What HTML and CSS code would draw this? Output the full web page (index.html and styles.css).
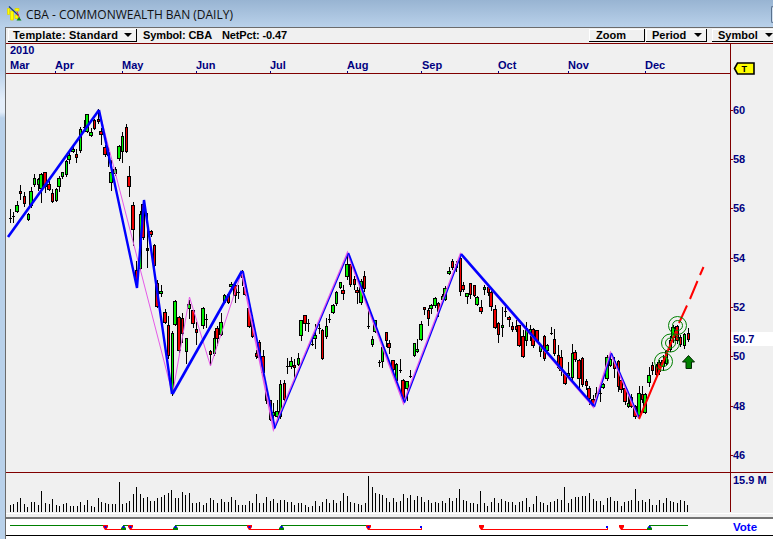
FILE: index.html
```html
<!DOCTYPE html>
<html lang="en">
<head>
<meta charset="utf-8">
<title>CBA - COMMONWEALTH BAN (DAILY)</title>
<link rel="stylesheet" href="styles.css">
</head>
<body>
<div class="window">
  <header class="titlebar">
    <svg class="app-icon" width="15" height="16" viewBox="0 0 15 16">
      <path d="M.5 2.500h2v6h-2zM3.500 5h3v9h-3zM8 2.500h4V5H8zM8 9h3v3.500H8z" fill="#ff0" stroke="#e0d400" stroke-width=".8"/>
      <path d="M2 .5l9.500 9" stroke="#173c86" stroke-width="1.2" fill="none"/>
      <path d="M10 5.500l2.500 6.500" stroke="#d33" stroke-width="1" fill="none"/>
      <path d="M9.500 14.500l2.500-3.500 2.500 3.500z" fill="#08851b"/>
    </svg>
    <span class="title">CBA - COMMONWEALTH BAN (DAILY)</span>
    <span class="window-button"></span>
  </header>
  <main class="frame">
    <div class="toolbar">
      <div class="button template"><span class="label-template">Template: Standard</span><i class="caret"></i></div>
      <span class="symbol-name">Symbol: CBA</span>
      <span class="net">NetPct: -0.47</span>
      <div class="button zoom"><span>Zoom</span></div>
      <div class="button period"><span>Period</span><i class="caret"></i></div>
      <div class="button symbol"><span>Symbol</span><i class="caret"></i></div>
    </div>
    <svg class="chart" width="767" height="470" viewBox="6 43 767 470">
      <g class="rules">
        <path d="M6 43.5H773M6 73.5H730M6 472.5H773M730.5 43V512"/>
        <path d="M730 110.500h3M730 159.500h3M730 208.500h3M730 258.500h3M730 307.500h3M730 356.500h3M730 406.500h3M730 455.500h3"/>
      </g>
      <path class="month-ticks" d="M55.500 71v2M122.500 71v2M196.500 71v2M270.500 71v2M347.500 71v2M421.500 71v2M498.500 71v2M568.500 71v2M645.500 71v2"/>
      <g class="axis">
        <text x="10" y="54">2010</text>
        <text x="10" y="69">Mar</text><text x="55" y="69">Apr</text><text x="122" y="69">May</text>
        <text x="196" y="69">Jun</text><text x="270" y="69">Jul</text><text x="347" y="69">Aug</text>
        <text x="422" y="69">Sep</text><text x="498" y="69">Oct</text><text x="568" y="69">Nov</text>
        <text x="645" y="69">Dec</text>
      </g>
      <rect x="731" y="332" width="42" height="14" fill="#fff"/>
      <g class="axis">
        <text x="733" y="114">60</text><text x="733" y="163">58</text><text x="733" y="212">56</text>
        <text x="733" y="262">54</text><text x="733" y="311">52</text><text x="733" y="343">50.7</text>
        <text x="733" y="360">50</text><text x="733" y="410">48</text><text x="733" y="459">46</text>
        <text x="733" y="484">15.9 M</text>
      </g>
      <path d="M734.500 68.500l3-5.500H754v11H737.500z" fill="#ff0" stroke="#000" stroke-width="1.6"/>
      <text class="tag" x="741.500" y="71.500">T</text>
      <g id="candles" shape-rendering="crispEdges"></g>
      <g class="trend">
        <path class="violet" d="M99 110L172.500 394L189.500 297L210.500 366L242 271"/>
        <path class="violet wide" d="M241.500 271L273.500 429L347.500 253L403.500 403L460.500 254L593.500 407L610.500 353L638.500 418"/>
        <path class="blue thick" d="M8 237L99 110"/>
        <path class="blue medium" d="M99 110L137 288L144 200L172 394"/>
        <path class="blue thick" d="M172.500 394L242 271"/>
        <path class="blue" d="M243 271L275 428"/>
        <path class="blue thin" d="M274.500 429L348.500 253"/>
        <path class="blue" d="M348.500 253L404.500 402"/>
        <path class="blue thin" d="M404.500 403L461.500 254"/>
        <path class="blue thick" d="M461 254L594 406"/>
        <path class="blue thin" d="M594.500 407L611.500 353"/>
        <path class="blue thin" d="M611.500 353L639.500 418"/>
      </g>
      <path class="projection" d="M639 419L677 329M679 323L687 305.500M690 299L697.500 281M700 275L703.500 267"/>
      <g class="targets">
        <circle cx="663.500" cy="361.500" r="9"/><circle cx="663.500" cy="361.500" r="5"/>
        <circle cx="670.500" cy="343" r="9"/><circle cx="670.500" cy="343" r="5"/>
        <circle cx="677.500" cy="325.500" r="9"/><circle cx="677.500" cy="325.500" r="5"/>
      </g>
      <path d="M688.500 355.500l6 6.500h-3v6.500h-5.500v-6.500h-3.500z" fill="#008000" stroke="#032803"/>
      <g id="volume" shape-rendering="crispEdges"></g>
    </svg>
    <div class="splitter"></div>
    <svg class="vote" width="767" height="20" viewBox="6 519 767 20">
      <g shape-rendering="crispEdges" fill="none">
        <path stroke="#008000" d="M10 525.500H105M123 525.500H130M175 525.500H249M281 525.500H368M649 525.500H688"/>
        <path stroke="#f00" d="M105 529.500H123M130 529.500H175M249 529.500H281M368 529.500H421M481 529.500H607M621 529.500H649"/>
      </g>
      <g id="signals"></g>
      <path d="M6 535.500H773" stroke="#000" shape-rendering="crispEdges"/>
      <text x="733" y="531">Vote</text>
    </svg>
  </main>
</div>
<script src="chart.js"></script>
</body>
</html>
```
FILE: styles.css
```css
* { box-sizing: border-box; }
body {
  margin: 0;
  font: bold 11px "Liberation Sans", Arial, sans-serif;
  color: #000;
}
.window {
  width: 773px;
  height: 539px;
  overflow: hidden;
  display: flex;
  flex-direction: column;
  background: linear-gradient(#b9d1ea 70px, #e4eefa 100px, #e4eefa 112px, #b9d1ea 118px);
}
.titlebar {
  height: 27px;
  flex: none;
  display: flex;
  align-items: center;
  padding: 1px 0 0 7px;
  background: linear-gradient(#98b4d2, #b9d1ea);
}
.app-icon { margin-right: 4px; }
.title {
  font: 12px "Open Sans", "Noto Sans", sans-serif;
  letter-spacing: -0.01px;
  white-space: nowrap;
  color: #111;
}
.window-button {
  width: 2px;
  height: 17px;
  margin-left: auto;
  border: 1px solid #59718e;
  border-right: 0;
  border-radius: 3px 0 0 3px;
  background: #d0dfef;
}
.frame {
  flex: 1;
  margin-left: 5px;
  border-left: 1px solid #6b6b6b;
  border-top: 1px solid #6b6b6b;
  background: #f0f0f0;
}
.toolbar {
  height: 15px;
  display: flex;
  align-items: flex-start;
  padding: 1px 0 0 2px;
  white-space: nowrap;
}
.button {
  height: 13px;
  display: flex;
  align-items: center;
  justify-content: space-between;
  flex: none;
  border: solid #000;
  border-width: 0 1px 1px 0;
  box-shadow: inset 1px 1px #fff;
}
.template { width: 129px; padding: 0 4px 0 5px; }
.label-template { letter-spacing: 0.18px; }
.symbol-name, .net { line-height: 13px; letter-spacing: -0.12px; }
.symbol-name { margin-left: 6px; }
.net { margin-left: 10px; }
.zoom { width: 56px; padding-left: 7px; margin-left: auto; }
.period { width: 61px; padding: 0 4px 0 6px; margin-left: 1px; }
.symbol { width: 61px; padding: 0 0 0 6px; margin-left: 5px; border-right: 0; }
.caret {
  border: 4px solid transparent;
  border-top-color: #000;
  border-bottom: 0;
}
.chart, .vote { display: block; }
.rules { stroke: #800000; shape-rendering: crispEdges; }
.month-ticks { stroke: #000080; shape-rendering: crispEdges; }
.axis { fill: #000080; }
.tag { font-size: 9px; }
.up { fill: #00f000; }
.down { fill: #f00000; }
.trend path { fill: none; }
.trend .violet { stroke: #e45ae8; stroke-width: 1; }
.trend .wide { stroke-width: 1.8; }
.blue { stroke: #0000ff; stroke-width: 1.7; }
.trend .thin { stroke-width: 1.1; }
.trend .medium { stroke-width: 2.4; }
.trend .thick { stroke-width: 2.6; }
.projection { stroke: #f00; stroke-width: 2; fill: none; }
.targets { stroke: #008000; fill: none; }
.splitter {
  height: 6px;
  border-top: 1px solid #fff;
  border-bottom: 2px solid #747474;
}
.vote { background: #fff; }
.vote text { fill: #0000ff; font-size: 11.5px; }
```
FILE: chart.js
```js
// Each candle: x, high, body top, body bottom, low, direction (g up, r down, k doji)
const candles = `
10 209 218 218 222 k;13 212 216 216 222 k;17 201 205 211 212 g;20 185 191 193 199 r;24 192 196 203 206 r;
28 213 214 219 220 g;31 187 191 205 207 g;34 174 178 184 186 g;38 178 179 184 190 g;41 173 174 188 202 g;
45 172 172 186 192 r;49 181 184 189 190 r;52 189 193 201 202 r;56 188 189 200 201 g;59 176 178 186 191 g;
62 172 172 176 178 g;66 160 161 174 176 g;69 153 155 159 163 g;73 145 149 151 152 g;76 149 154 157 162 r;
80 127 129 150 152 g;84 120 127 127 130 k;87 114 114 131 132 g;91 128 132 135 136 g;94 119 120 128 129 r;
98 109 119 121 123 r;101 128 131 134 144 r;105 145 147 154 156 r;108 147 152 155 166 r;111 160 172 182 190 g;
115 167 169 173 175 g;119 145 146 158 160 g;122 132 136 151 162 g;126 124 127 151 152 r;129 166 176 186 196 r;
133 202 205 229 245 r;136 261 270 280 282 r;140 211 214 268 269 g;143 202 204 237 239 r;147 213 248 250 267 k;
151 230 231 234 236 r;154 244 245 265 266 r;157 280 283 306 307 r;161 285 291 293 296 g;165 309 312 322 323 r;
168 316 325 355 358 r;172 331 333 392 395 g;175 300 301 324 325 g;179 316 317 350 352 r;182 313 318 333 342 r;
186 338 338 351 363 g;189 300 304 308 318 g;193 310 310 323 327 r;196 322 329 332 344 r;203 307 308 325 328 g;
206 314 319 319 327 k;210 350 351 354 365 r;214 331 338 353 355 g;217 326 328 338 345 r;221 313 322 334 335 g;
224 294 295 302 303 g;228 293 294 302 303 r;231 282 284 286 290 g;235 282 285 295 302 r;238 285 292 292 298 k;
242 270 275 277 285 g;245 286 287 294 295 r;249 307 308 326 327 r;252 315 320 336 337 r;256 350 353 356 358 r;
259 340 342 357 359 r;263 350 356 372 378 r;266 385 390 400 403 k;270 400 400 419 420 r;273 403 412 415 421 g;
277 400 411 416 418 g;280 380 384 416 418 g;284 380 383 399 401 r;287 358 366 366 373 k;291 357 361 366 368 g;
294 359 365 367 378 r;298 353 358 364 365 g;301 320 320 335 340 g;305 315 315 323 330 r;308 319 323 323 331 k;
312 339 344 344 345 k;315 324 335 338 348 g;319 324 328 328 333 k;322 329 330 358 359 r;326 318 326 336 338 g;
329 314 319 319 322 k;333 304 305 312 313 g;336 291 292 303 305 g;340 282 282 287 288 g;343 285 290 293 299 r;
347 254 264 276 279 g;350 264 264 284 286 r;354 276 279 284 289 r;357 287 290 292 303 r;361 279 281 302 304 g;
364 271 276 288 291 r;368 310 326 326 328 k;372 336 339 344 346 g;375 320 320 331 332 g;379 360 362 362 366 k;
382 345 347 361 367 g;386 332 332 340 346 r;389 340 343 347 353 r;393 360 360 369 372 r;396 363 364 380 382 g;
400 359 370 370 372 k;403 379 380 398 400 r;407 381 381 388 400 g;410 370 376 376 377 k;414 343 343 355 356 g;
417 339 349 351 352 g;421 321 324 339 340 g;424 307 307 309 314 r;428 308 310 318 325 r;431 304 305 308 313 g;
435 297 298 305 307 g;438 302 303 311 316 r;442 294 296 299 300 g;445 286 288 299 300 g;449 267 271 273 274 g;
452 259 261 267 269 r;456 261 264 267 271 g;460 257 258 291 295 r;463 282 285 289 291 r;467 293 293 296 303 g;
470 283 283 294 298 r;474 285 285 295 296 r;477 296 297 304 305 g;481 300 307 311 313 r;484 285 287 289 294 g;
488 286 287 292 295 r;491 290 292 306 310 r;495 305 309 327 328 r;498 322 323 334 342 r;502 307 325 327 336 g;
505 306 311 311 316 k;509 316 317 319 326 r;512 322 326 329 331 r;516 320 326 329 331 r;519 325 325 345 346 r;
523 330 336 356 357 r;526 322 328 340 345 g;530 325 329 333 340 g;533 328 329 345 347 r;537 330 330 340 341 r;
540 345 346 351 356 g;544 335 336 358 360 r;547 344 345 350 352 g;551 327 333 333 334 k;554 329 339 353 355 r;
558 345 355 367 368 r;561 350 357 370 375 r;565 372 373 383 384 r;568 362 373 375 378 g;572 344 353 377 382 g;
575 350 352 359 361 r;579 359 360 378 387 r;582 357 358 384 386 r;586 379 381 385 389 r;589 386 388 398 404 r;
593 395 399 404 405 r;596 387 393 397 400 g;600 383 393 393 401 k;603 383 384 387 388 g;607 355 357 378 380 g;
610 352 359 365 366 g;614 357 361 368 377 r;618 360 361 386 391 r;621 377 380 389 392 r;625 387 388 401 404 r;
628 393 403 406 407 g;631 394 397 406 407 r;635 405 406 416 418 r;639 386 393 415 417 g;642 386 394 399 402 r;
645 393 394 412 413 g;649 367 375 382 386 g;652 362 365 370 374 r;656 364 366 374 377 r;659 360 362 371 374 r;
663 355 360 366 370 g;666 350 351 363 364 g;670 336 340 349 351 g;673 325 327 337 342 g;677 325 326 340 343 r;
680 335 337 344 346 r;684 333 334 345 348 g;688 328 333 339 341 r`;

// Volume runs: starting x and bar heights
const volumes = [
  { start: 10.4, bars: [
    7,8,10,14,8,5,10,10,7,21,9,8,13,7,6,8,9,6,6,6,10,7,12,6,5,14,10,9,8,8,8,30,8,9,11,18,25,18,14,15,11,11,14,15,17,
    19,22,14,14,20,17,19,9,9,10,7,9,14,12,9,13,10,10,15,12,7,7,7,11] },
  { start: 252.7, bars: [
    9,18,9,9,15,11,13,9,12,12,10,10,7,9,9,7,5,6,11,6,10,13,9,12,9,11,19,16,10,9,8,7,9,36,25,19,18,17,14,10,14,10,11,
    18,14,17,12,16,15,10,12,9,10,9,11,9,14,11,14,23,12,11,9,9,8,21,9,6,10,14,9,13,11,10,10,7] },
  { start: 519.3, bars: [
    10,11,14,5,8,16,10,9,7,10,11,13,12,25,9,13,15,15,16,16,19,13,11,11,7,14,15,11,11,6,10,11,12,23,11,12,10,13,7,7,
    12,9,14,11,10,9,12,11,7] }
];

const rect = (x, y, w, h, cls) =>
  `<rect x="${x}" y="${y}" width="${w}" height="${h}"${cls ? ` class="${cls}"` : ''}/>`;

document.getElementById('candles').innerHTML = candles.trim().split(';').map((row) => {
  const [sx, hi, top, bottom, lo, kind] = row.trim().split(' ');
  const x = +sx, t = +top, b = +bottom;
  const wick = rect(x, +hi, 1, lo - hi + 1);
  if (kind === 'k') return wick + rect(x - 1, t, 3, b - t + 1);
  const extra = x % 2;
  return wick + rect(x - 1 - extra, t, 3 + extra, b - t + 1) +
    rect(x - extra, t + 1, 1 + extra, Math.max(1, b - t - 1), kind === 'g' ? 'up' : 'down');
}).join('');

document.getElementById('volume').innerHTML = volumes.map(({ start, bars }) =>
  bars.map((v, i) => rect(Math.floor(start + i * 3.51), 512 - v, 1, v)).join('')).join('');

const down = (x, core) => `<path d="M${x - 2} 525h5v2l-2 3h-1l-2-3z" fill="#f00"/>` +
  (core ? rect(x - 0.5, 526, 2, 2, 'core') : '');
const up = (x) => `<path d="M${x - 2} 530v-2l2-2h1l2 2v2z" fill="#008000"/>` + rect(x - 0.5, 526, 2, 2, 'core');
document.getElementById('signals').innerHTML =
  [105, 130, 249, 368].map((x) => down(x, true)).join('') +
  [481, 621].map((x) => down(x, false)).join('') +
  [123, 175, 281, 649].map(up).join('') +
  [421, 607].map((x) => rect(x - 1, 526, 2, 2, 'core') + `<path d="M${x + .5} 528v2" stroke="#f00"/>`).join('');
document.querySelectorAll('.core').forEach((el) => el.setAttribute('fill', '#00f'));
```
